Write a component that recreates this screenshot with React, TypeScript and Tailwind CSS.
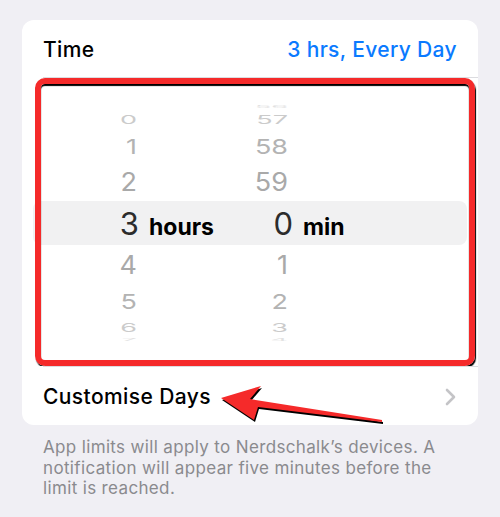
import React from "react";

interface WheelRow {
  box: string;
  tone: string;
  hour: string;
  minute: string;
}

// rows above / below the selected one, shrunk like a drum
const above: WheelRow[] = [
  { box: "h-[6px]", tone: "text-[#e2e2e2] scale-y-[0.12]", hour: "", minute: "56" },
  { box: "h-[20px]", tone: "text-[#cbcbcb] scale-y-[0.45]", hour: "0", minute: "57" },
  { box: "h-[34px]", tone: "text-[#b3b3b3] scale-y-[0.76]", hour: "1", minute: "58" },
  { box: "h-[38px]", tone: "text-[#a9a9a9] scale-y-[0.93]", hour: "2", minute: "59" },
];

const below: WheelRow[] = [
  { box: "h-[40px]", tone: "text-[#a9a9a9] scale-y-[0.93]", hour: "4", minute: "1" },
  { box: "h-[32px]", tone: "text-[#b3b3b3] scale-y-[0.76]", hour: "5", minute: "2" },
  { box: "h-[20px]", tone: "text-[#cbcbcb] scale-y-[0.45]", hour: "6", minute: "3" },
  { box: "h-[4px]", tone: "text-[#e2e2e2] scale-y-[0.12]", hour: "7", minute: "4" },
];

function Row({ row }: { row: WheelRow }) {
  return (
    <div className={`flex items-center ${row.box}`}>
      <span className={`w-[115px] shrink-0 text-right text-[27px] leading-none ${row.tone}`}>
        {row.hour}
      </span>
      <span className={`w-[151px] shrink-0 text-right text-[27px] leading-none ${row.tone}`}>
        {row.minute}
      </span>
    </div>
  );
}

export default function App() {
  return (
    <div className="relative h-[517px] w-[500px] overflow-hidden bg-[#f0eff4] pt-[20px] font-['Inter',sans-serif]">
      {/* Card */}
      <div className="ml-[22px] w-[456px] rounded-[12px] bg-white">
        {/* Time row */}
        <div className="ml-[21px] flex h-[58px] items-center justify-between border-b border-[#dcdce0] pr-[21px] pt-[2px]">
          <span className="text-[21px] font-medium leading-none tracking-[0.35px] text-black">Time</span>
          <span className="text-[21px] font-medium leading-none tracking-[0.35px] text-[#0a7aff]">
            3 hrs, Every Day
          </span>
        </div>

        {/* Picker */}
        <div className="relative h-[288px] overflow-hidden">
          <div className="h-[25px]" />
          {above.map((r, i) => (
            <Row key={`a${i}`} row={r} />
          ))}

          {/* Selected row */}
          <div className="mx-[11px] flex h-[44px] items-center rounded-[8px] bg-[#f1f1f2]">
            <div className="flex items-baseline">
              <span className="w-[106px] shrink-0 text-right text-[31px] leading-none text-[#2c2c2c]">3</span>
              <span className="w-[104px] shrink-0 pl-[10px] text-[23px] font-bold leading-none text-black">
                hours
              </span>
              <span className="w-[50px] shrink-0 text-right text-[31px] leading-none text-[#2c2c2c]">0</span>
              <span className="pl-[10px] text-[23px] font-bold leading-none text-black">min</span>
            </div>
          </div>

          {below.map((r, i) => (
            <Row key={`b${i}`} row={r} />
          ))}

          {/* Red annotation box */}
          <div className="pointer-events-none absolute bottom-0 left-[13px] right-[3px] top-0 rounded-[10px] border-[6px] border-[#f52a2a] shadow-[1px_2px_1px_#000,inset_0_2px_1px_#000]" />
        </div>

        {/* Customise Days row */}
        <div className="ml-[21px] flex h-[59px] items-center justify-between border-t border-[#dcdce0] pr-[22px] pt-[1px]">
          <span className="text-[21px] font-medium leading-none tracking-[0.4px] text-black">Customise Days</span>
          <svg width="11" height="18" viewBox="0 0 11 18" fill="none">
            <path d="M2 2l7 7-7 7" stroke="#c4c4c7" strokeWidth="2.6" strokeLinecap="round" strokeLinejoin="round" />
          </svg>
        </div>
      </div>

      {/* Footer note */}
      <p className="mt-[12px] pl-[43px] text-[17px] leading-[20.5px] tracking-[0.35px] text-[#8a8a8e]">
        App limits will apply to Nerdschalk’s devices. A
        <br />
        notification will appear five minutes before the
        <br />
        limit is reached.
      </p>

      {/* Red annotation arrow */}
      <svg className="pointer-events-none absolute left-0 top-0" width="500" height="517" viewBox="0 0 500 517">
        <polygon points="222,400 262,388 251,401 383,422 383,424 259,409 255,422" fill="#000" />
        <polygon points="221,398 261,386 250,399 382,420 382,422 258,407 254,420" fill="#f52a2a" />
      </svg>
    </div>
  );
}
